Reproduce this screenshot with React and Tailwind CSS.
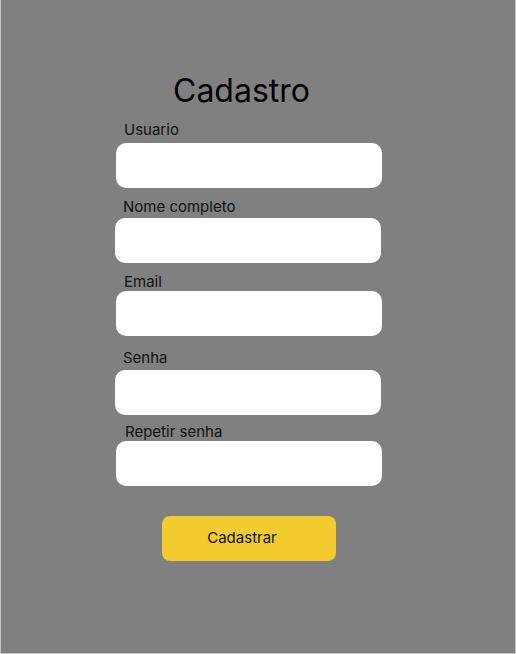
export default function App() {
	// campos do formulário com pequenos deslocamentos do layout original
	const fields = [
		{ label: "Usuario", labelClass: "mt-[11px] ml-[123px]", inputClass: "mt-[4px] ml-[115px]" },
		{ label: "Nome completo", labelClass: "mt-[10px] ml-[122px]", inputClass: "mt-[2px] ml-[114px]" },
		{ label: "Email", labelClass: "mt-[10px] ml-[123px]", inputClass: "mt-0 ml-[115px]" },
		{ label: "Senha", labelClass: "mt-[13px] ml-[122px]", inputClass: "mt-[3px] ml-[114px]" },
		{ label: "Repetir senha", labelClass: "mt-[8px] ml-[124px]", inputClass: "mt-0 ml-[115px]" },
	];

	return (
		<div
			className="w-[516px] h-[654px] bg-[#808080] border-l border-r border-b border-[#c4c4c4] flex flex-col"
			style={{ fontFamily: "Inter, 'Noto Sans', sans-serif" }}
		>
			<h1 className="mt-[71px] ml-[172px] text-[32px] leading-[39px] text-black font-normal">
				Cadastro
			</h1>

			{fields.map((field) => (
				<div key={field.label} className="flex flex-col">
					<label className={`${field.labelClass} text-[15px] leading-[18px] text-[#111]`}>
						{field.label}
					</label>
					<input
						type="text"
						className={`${field.inputClass} w-[266px] h-[45px] bg-white rounded-[10px] outline-none px-3`}
					/>
				</div>
			))}

			<button
				type="button"
				className="mt-[30px] ml-[161px] w-[174px] h-[45px] bg-[#f2cc2e] rounded-[8px] text-[15px] text-[#111] flex items-center justify-center pr-[14px]"
			>
				Cadastrar
			</button>
		</div>
	);
}
